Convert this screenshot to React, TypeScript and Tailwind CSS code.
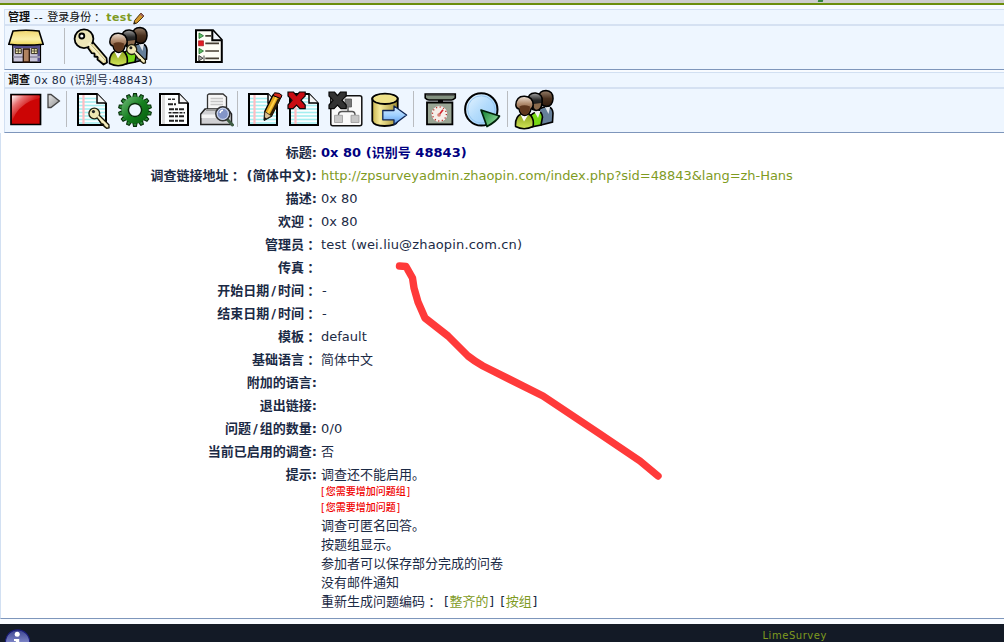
import type { ReactNode } from "react";

const FONT = "font-['DejaVu_Sans','Noto_Sans_CJK_SC',sans-serif]";

type IconProps = { w: number; className?: string; children: ReactNode };

function Icon({ w, className = "", children }: IconProps) {
  return (
    <svg width={w} height={43} viewBox={`0 0 ${w} 43`} className={`block shrink-0 ${className}`}>
      {children}
    </svg>
  );
}

function Sep({ className = "" }: { className?: string }) {
  return <div className={`mt-[2px] h-[36px] w-px shrink-0 bg-[#b9bcc0] ${className}`} />;
}

/* Full-width colon, centred in its cell. */
function Colon() {
  return (
    <span className="inline-block translate-y-px leading-none font-['Noto_Sans_CJK_TC',sans-serif]">：</span>
  );
}

function Slash() {
  return <span className="px-[2px]">/</span>;
}

function Defs() {
  return (
    <svg width="0" height="0" className="absolute">
      <defs>
        <linearGradient id="roof" x1="0" y1="0" x2="0" y2="1">
          <stop offset="0" stopColor="#f0d56e" />
          <stop offset=".6" stopColor="#fbf0a8" />
          <stop offset="1" stopColor="#f0d650" />
        </linearGradient>
        <linearGradient id="stop" x1="0" y1="0" x2=".8" y2=".8">
          <stop offset="0" stopColor="#fff" />
          <stop offset=".3" stopColor="#e87070" />
          <stop offset=".6" stopColor="#d21c1c" />
          <stop offset="1" stopColor="#cc0a0a" />
        </linearGradient>
        <linearGradient id="play" x1="0" y1="0" x2="1" y2="1">
          <stop offset="0" stopColor="#e6e6e6" />
          <stop offset="1" stopColor="#8f8f8f" />
        </linearGradient>
        <linearGradient id="gear" x1="0" y1="0" x2="1" y2="1">
          <stop offset="0" stopColor="#5fae68" />
          <stop offset=".5" stopColor="#15801f" />
          <stop offset="1" stopColor="#08640f" />
        </linearGradient>
        <linearGradient id="brown" x1="0" y1="0" x2="0" y2="1">
          <stop offset="0" stopColor="#f0e4d8" />
          <stop offset=".4" stopColor="#b08a6c" />
          <stop offset="1" stopColor="#5a351c" />
        </linearGradient>
        <linearGradient id="black" x1="0" y1="0" x2="0" y2="1">
          <stop offset="0" stopColor="#a5a5a5" />
          <stop offset=".4" stopColor="#2b2b2b" />
          <stop offset="1" stopColor="#000" />
        </linearGradient>
        <linearGradient id="darkbrown" x1="0" y1="0" x2="0" y2="1">
          <stop offset="0" stopColor="#99816c" />
          <stop offset=".5" stopColor="#4b3220" />
          <stop offset="1" stopColor="#2c180b" />
        </linearGradient>
        <linearGradient id="olive" x1="0" y1="0" x2="0" y2="1">
          <stop offset="0" stopColor="#8ba11a" />
          <stop offset="1" stopColor="#d3e65a" />
        </linearGradient>
        <linearGradient id="pie" x1="0" y1="0" x2="1" y2="1">
          <stop offset="0" stopColor="#eaf6ff" />
          <stop offset=".5" stopColor="#b4dcfc" />
          <stop offset="1" stopColor="#94caf8" />
        </linearGradient>
        <linearGradient id="wedge" x1="0" y1="0" x2="1" y2=".6">
          <stop offset="0" stopColor="#0a7a2a" />
          <stop offset="1" stopColor="#8fdc9c" />
        </linearGradient>
        <linearGradient id="cyl" x1="0" y1="0" x2="1" y2="0">
          <stop offset="0" stopColor="#c9b44e" />
          <stop offset=".3" stopColor="#f6eb9b" />
          <stop offset="1" stopColor="#a08c30" />
        </linearGradient>
        <linearGradient id="arrow" x1="0" y1="0" x2="0" y2="1">
          <stop offset="0" stopColor="#d8ecff" />
          <stop offset=".5" stopColor="#9fd0ff" />
          <stop offset="1" stopColor="#5796e8" />
        </linearGradient>
        <linearGradient id="info" x1="0" y1="0" x2="0" y2="1">
          <stop offset="0" stopColor="#3b438f" />
          <stop offset=".5" stopColor="#7a82c4" />
          <stop offset="1" stopColor="#2b3190" />
        </linearGradient>
      </defs>
    </svg>
  );
}

function SmallKey({ x, y, s = 1 }: { x: number; y: number; s?: number }) {
  return (
    <g transform={`translate(${x} ${y}) scale(${s})`}>
      <path d="M2.5 3.5 L5 2 L13.6 10.6 L13.8 13.4 L11.5 13.8 L9 11.8 L8.6 10 L6.5 9.4 Z" fill="#ecdfa0" stroke="#151306" strokeWidth="1.3" strokeLinejoin="round" />
      <circle r="5" fill="#efe6b2" stroke="#222010" strokeWidth="1.3" />
      <path d="M3.2 2.6 L12.6 12" stroke="#f6efc4" strokeWidth="1.8" />
      <circle cx="-.8" cy="-1.8" r="1.5" fill="#222" />
    </g>
  );
}

function People({ withKey = false }: { withKey?: boolean }) {
  return (
    <>
      <path d="M25 20 Q38 14 39 24 L38.5 33 L27 36 Z" fill="#657f99" stroke="#000" strokeWidth="1.6" />
      <path d="M31 18 L34.5 25 L36 18 Z" fill="#e4e8ee" />
      <path d="M24.5 8.5 Q25 1.4 32 1.4 Q39.4 2 39 10 Q38.5 17 32.5 17.6 Q26 17 24.5 8.5 Z" fill="url(#darkbrown)" stroke="#000" strokeWidth="1.5" />
      <path d="M17 26 Q27 18 28.5 28 L27 36 L17 38 Z" fill="#76d815" stroke="#000" strokeWidth="1.6" />
      <path d="M20 22 L24 29 L26.5 22 Z" fill="#f1f1f1" />
      <path d="M13.5 12 Q14 3.6 21.5 4 Q29 5 28.2 12.5 Q28 21 22 21.6 Q15 21 13.5 12 Z" fill="url(#black)" stroke="#000" strokeWidth="1.5" />
      <path d="M19.2 15 L27.2 14 Q26.5 20.6 22.4 20.8 Q19.5 20 19.2 15 Z" fill="#8a6a4c" />
      <path d="M1.6 37.5 Q.8 28 7 25 L15 25 Q20.6 29 19 37.5 Q10 42 1.6 37.5 Z" fill="url(#olive)" stroke="#000" strokeWidth="1.6" />
      <path d="M6.5 25.5 L10 32.5 L14.5 25.5 Z" fill="#fff" />
      <path d="M1.8 16 Q2.4 6.8 10.6 7.2 Q19 7.6 19.2 16 Q18.5 19.6 17 20 Q16 26.2 10.6 26.5 Q6 26 5 20 Q2 19.4 1.8 16 Z" fill="url(#brown)" stroke="#000" strokeWidth="1.5" />
      <path d="M5.4 17.5 Q10 15 16 17.5 Q16 25.7 10.5 25.7 Q6 25.2 5.4 17.5 Z" fill="#5f371d" />
      {withKey && <SmallKey x={23.7} y={23.5} />}
    </>
  );
}

function Page({ x = 0, right = 30, lined = true }: { x?: number; right?: number; lined?: boolean }) {
  const f = right - 10;
  return (
    <g>
      <path d={`M${x + 1} 5 H${f} L${right - 1} 14.5 V36 H${x + 1} Z`} fill="#fcfefe" stroke="#000" strokeWidth="2" />
      {lined &&
        [9.5, 13, 16.5, 20, 23.5, 27, 30.5, 34].map((y) => (
          <path key={y} d={`M${x + 2} ${y} H${y < 14 ? f - 1 : right - 2}`} stroke="#a4eef0" strokeWidth="1.6" />
        ))}
      {lined && <path d={`M${x + 6.5} 6 V35`} stroke="#ffbcc2" strokeWidth="2.2" />}
      <path d={`M${f} 5 V14 H${right - 1}`} fill="#f4f4f4" stroke="#000" strokeWidth="1.5" />
    </g>
  );
}

function Cross({ fill }: { fill: string }) {
  return (
    <path
      d="M1 3 H6.5 L9.5 6.6 L12.5 3 H18.2 V7 L14 11.2 L18.2 16 V19.7 H13 L9.5 16 L6 19.7 H1 V16 L5 11.2 L1 7 Z"
      fill={fill}
      stroke="#080808"
      strokeWidth="1.2"
    />
  );
}

function Pencil() {
  return (
    <g strokeLinejoin="round">
      <path d="M25 6 L32.5 8.5 L23.5 27 L16.3 31 L16.8 22.5 Z" fill="#e4a61d" stroke="#000" strokeWidth="1.5" />
      <path d="M28.5 7.8 L19.4 25" stroke="#ffd24a" strokeWidth="1.8" />
      <path d="M31.2 9.8 L22.6 26.5" stroke="#302008" strokeWidth="2.6" />
      <path d="M16.8 22.5 L23.5 27 L16.3 31 Z" fill="#dcc49a" stroke="#302515" strokeWidth=".9" />
      <path d="M16.4 28 L18.8 29.5 L16.2 31.2 Z" fill="#111" />
      <path d="M26.5 3.8 Q32 3.5 34 6.5 L32.5 9.5 L25 6.5 Z" fill="#d22a1c" stroke="#000" strokeWidth="1" />
    </g>
  );
}

const TEETH = Array.from({ length: 14 }, (_, i) => (i * 360) / 14);

function TitleStrip({ children }: { children: ReactNode }) {
  return (
    <div className="flex h-[17px] items-center border-t border-[#d2e0f2] pl-[3px] text-[11px] whitespace-nowrap text-[#1b2a45]">
      {children}
    </div>
  );
}

function AdminBar() {
  return (
    <section className="ml-1 h-[61px] border-b border-l border-b-[#7e96bb] border-l-[#d2e0f2] bg-[#eef6ff]">
      <div className="h-[15px]">
        <TitleStrip>
          <b className="text-[#111]">管理</b>
          <span className="ml-[4px] tracking-[0.7px] text-[#111]">--</span>
          <span className="ml-[4px] text-[#111]">
            登录身份
            <Colon />
          </span>
          <b className="ml-[4px] tracking-[0.35px] text-[#7f9b1f]">test</b>
          <svg width="12" height="13" viewBox="0 0 12 13" className="ml-[1px] block">
            <path d="M8 1 L11 4 L4 11 L.8 12 L1.6 8.5 Z" fill="#d29a2c" stroke="#4c320c" />
            <path d="M8 1 L11 4 L9.8 5.2 L6.8 2.2 Z" fill="#9b6262" />
            <path d="M.6 12.2 L1.4 9.6 L3 11.4 Z" fill="#222" />
          </svg>
        </TitleStrip>
      </div>
      <div className="h-[2px] bg-[#d5e1f2]" />
      <div className="flex h-[43px]">
        <Icon w={36} className="ml-[3px]">
          <path d="M4.8 19 H32.4 V36.3 H4.8 Z" fill="#c9c5da" stroke="#000" strokeWidth="1.4" />
          <path d="M5.5 19 H32 V22 H5.5 Z M29.5 20 H32 V35.6 H29.5 Z" fill="#57508c" />
          <path d="M5.5 31 H15 M22 31 H32" stroke="#9995ad" strokeWidth="2" />
          <path d="M7.3 22.6 h6 v5 h-6 z M23.3 22.6 h6 v5 h-6 z" fill="#f4eeb4" stroke="#332b20" />
          <path d="M10.3 22.6 v5 M26.3 22.6 v5 M7.3 25 h6 M23.3 25 h6" stroke="#332b20" strokeWidth=".8" />
          <path d="M15.3 23 h6 v13 h-6 z" fill="#b08260" stroke="#2b150a" strokeWidth="1.3" />
          <path d="M5 5 Q18 3.6 31 5 L35.2 18.3 Q18 20 .8 18.3 Z" fill="url(#roof)" stroke="#000" strokeWidth="1.6" />
        </Icon>
        <Sep className="ml-[20px]" />
        <Icon w={35} className="ml-[8px]">
          <path d="M13 19 L18.5 14.5 L33.5 32 L34 36.5 L30.5 38.5 L24.5 33.5 L24.7 31 L21.5 30.5 L21.6 27.5 L18.8 27.2 Z" fill="#e8dc9e" stroke="#000" strokeWidth="1.8" strokeLinejoin="round" />
          <circle cx="11" cy="12.8" r="9.4" fill="#eee6b8" stroke="#000" strokeWidth="1.8" />
          <path d="M15.5 17 L31.5 34.5" stroke="#f6f0c9" strokeWidth="3.4" />
          <path d="M17.5 18 L32 34" stroke="#b8aa65" strokeWidth=".9" />
          <circle cx="8.8" cy="10" r="2.5" fill="#fff" stroke="#000" strokeWidth="1.8" />
        </Icon>
        <Icon w={40}>
          <People withKey />
        </Icon>
        <Icon w={30} className="ml-[47px]">
          <path d="M1 4.2 H18 L26.8 14 V36 H1 Z" fill="#fdfdf6" stroke="#000" strokeWidth="2" />
          <path d="M17.3 4.5 V14.3 H26.5" fill="#eef3fa" stroke="#000" strokeWidth="2" />
          <path d="M10.3 9.8 H16 M10.3 17.3 H24 M10.3 25 H24 M10.3 32.3 H24" stroke="#453e32" strokeWidth="1.7" />
          <path d="M4 7 L8.5 9.8 L4 12.5 Z M4 22.3 L8.5 25 L4 27.8 Z" fill="#61bd66" stroke="#1b6b2a" strokeWidth=".8" />
          <path d="M3.5 14.8 h5 v5 h-5 z" fill="#df1d25" stroke="#9d0b12" strokeWidth=".6" />
          <path d="M3.8 29.5 L8 32.2 L3.8 35 Z M9 29.5 V35" fill="#aaa" stroke="#333" strokeWidth=".9" />
        </Icon>
      </div>
    </section>
  );
}

function SurveyBar() {
  return (
    <section className="mt-[2px] ml-1 h-[61px] border-b border-l border-b-[#7e96bb] border-l-[#d2e0f2] bg-[#eef6ff]">
      <div className="h-[15px]">
        <TitleStrip>
          <b className="text-[#111]">调查</b>
          <span className="ml-[4px] tracking-[0.24px]">0x 80 (识别号:48843)</span>
        </TitleStrip>
      </div>
      <div className="h-[2px] bg-[#d5e1f2]" />
      <div className="flex h-[43px]">
        <Icon w={32} className="ml-[5px]">
          <path d="M1 5.7 H30.5 V35.5 H1 Z" fill="#cc0505" stroke="#000" strokeWidth="1.7" />
          <path d="M2 6.5 H29.5 V9 Q13 13 5.5 25 L2 32 Z" fill="url(#stop)" />
        </Icon>
        <Icon w={14} className="ml-[5px]">
          <path d="M1 5.5 L4 5.5 L12.4 12 L4 18.5 H1 Z" fill="url(#play)" stroke="#444" strokeWidth="1.3" />
        </Icon>
        <Sep className="ml-[5px]" />
        <Icon w={34} className="ml-[10px]">
          <Page />
          <SmallKey x={17.3} y={24.5} s={1.07} />
        </Icon>
        <Icon w={35} className="ml-[7px]">
          {TEETH.map((a) => (
            <path key={a} d="M14.9 8 L15.6 4.6 H18.4 L19.1 8 Z" transform={`rotate(${a} 17 21)`} fill="#2a8a34" stroke="#052c08" strokeWidth="1.1" />
          ))}
          <circle cx="17" cy="21" r="10.3" fill="none" stroke="url(#gear)" strokeWidth="6.6" />
          <circle cx="17" cy="21" r="6.6" fill="#eef6ff" stroke="#052c08" strokeWidth="1.5" />
        </Icon>
        <Icon w={31} className="ml-[6px]">
          <Page lined={false} />
          <path d="M4.5 6 V35" stroke="#ddd" strokeWidth="3" />
          <path d="M9 10.3 H16" stroke="#333" strokeWidth="1.5" strokeDasharray="3 1" />
          <path d="M9 15.3 H17 M10 20.3 H26 M10 27.3 H26 M10 31.8 H26" stroke="#222" strokeWidth="2" strokeDasharray="5 1 3 1" />
          <path d="M9.5 23.8 H26" stroke="#222" strokeWidth="1.6" strokeDasharray="3 1 6 1" />
        </Icon>
        <Icon w={34} className="ml-[10px]">
          <path d="M9 5 H23 L26.5 8 V22 H7.5 V6 Z" fill="#f6f6f6" stroke="#333" strokeWidth="1.3" />
          <path d="M10.5 9.5 H23 M10.5 12.5 H23 M10.5 15.5 H23" stroke="#c6c6c6" strokeWidth="1.3" />
          <path d="M5 20 H28 L31.5 25 V35.5 H.8 V25 Z" fill="#d0d0d3" stroke="#222" strokeWidth="1.5" />
          <path d="M1.6 25.5 H30 V29 H1.6 Z" fill="#f4f4f4" />
          <path d="M6 21 H27" stroke="#999" strokeWidth="2" />
          <path d="M27 30 L32.5 36" stroke="#3f5c43" strokeWidth="3" strokeLinecap="round" />
          <circle cx="22.8" cy="24.8" r="7" fill="#a8b8de" stroke="#333" strokeWidth="1.5" />
          <circle cx="22.8" cy="24.8" r="5.5" fill="#8395c7" stroke="#d0d8ec" strokeWidth="1" />
          <path d="M20 24 Q20.5 21.5 23 21.3" fill="none" stroke="#fff" strokeWidth="1.4" />
        </Icon>
        <Sep className="ml-[3px]" />
        <Icon w={35} className="ml-[10px]">
          <Page />
          <Pencil />
        </Icon>
        <Icon w={33} className="ml-[4px]">
          <Page x={2} right={32} />
          <Cross fill="#c90c12" />
        </Icon>
        <Icon w={35} className="ml-[8px]">
          <rect x="2.8" y="6.8" width="31" height="30" rx="2" fill="#fafafa" stroke="#111" strokeWidth="1.5" />
          <path d="M17 10 h6.5 v8 h-6.5 z" fill="#777" stroke="#555" strokeWidth=".8" />
          <path d="M10.5 26 Q10.5 22.5 14 22.5 H24 Q27 22.5 27 26 M20 18 V22.5" fill="none" stroke="#555" strokeWidth="1.4" />
          <path d="M6.5 26.3 h8 v7.2 h-8 z M23 26.3 h8 v7.2 h-8 z" fill="#c7c7c7" stroke="#999" strokeWidth=".8" />
          <Cross fill="#333" />
        </Icon>
        <Icon w={37} className="ml-[8px]">
          <path d="M1.3 9.5 V32 Q3 37 13.5 37 Q25 37 26.7 32 V9.5 Z" fill="url(#cyl)" stroke="#000" strokeWidth="1.8" />
          <ellipse cx="14" cy="9.8" rx="12.7" ry="5.2" fill="#f2e692" stroke="#000" strokeWidth="1.8" />
          <ellipse cx="14" cy="9.8" rx="11" ry="3.8" fill="#eee188" />
          <path d="M11.8 21.5 H23 V17 L35.6 26 L23 35.6 V30.8 H11.8 Z" fill="url(#arrow)" stroke="#0e2555" strokeWidth="1.3" strokeLinejoin="round" />
        </Icon>
        <Sep className="ml-[5px]" />
        <Icon w={33} className="ml-[10px]">
          <path d="M14 11 h5 v4 h-5 z" fill="#111" />
          <path d="M1.2 5 H31.3 V9 Q29 11 27.5 11 H5 Q3 11 1.2 9 Z" fill="#81907f" stroke="#000" strokeWidth="1.6" />
          <path d="M2.5 5.8 H30" stroke="#333" strokeWidth="1.6" />
          <path d="M3 13.5 H28.4 V35.3 H3 Z" fill="#99a594" stroke="#000" strokeWidth="1.8" />
          <circle cx="15.4" cy="25" r="8.4" fill="#f5eee9" stroke="#8c9287" strokeWidth=".8" />
          <circle cx="15.4" cy="25" r="7" fill="none" stroke="#b9362f" strokeWidth="1.4" strokeDasharray="1.2 2.465" />
          <path d="M14.5 26.5 L19 20.8" stroke="#d3202a" strokeWidth="1.6" />
          <circle cx="15" cy="26" r="1.8" fill="#d78276" />
        </Icon>
        <Icon w={37} className="ml-[7px]">
          <circle cx="17.3" cy="20.4" r="16.2" fill="url(#pie)" stroke="#000" strokeWidth="2" />
          <circle cx="17.3" cy="20.4" r="13.6" fill="none" stroke="#8fc2ee" strokeWidth=".8" />
          <path d="M17 21 L35.5 27 Q33 32 23 37.5 Z" fill="url(#wedge)" stroke="#00210a" strokeWidth="1.7" strokeLinejoin="round" />
        </Icon>
        <Sep className="ml-[6px]" />
        <Icon w={40} className="ml-[6px]">
          <People />
        </Icon>
      </div>
    </section>
  );
}

type Row = { label: ReactNode; value?: ReactNode };

const ROWS: Row[] = [
  { label: "标题:", value: <b className="tracking-[0.03px] text-[#000080]">0x 80 (识别号 48843)</b> },
  {
    label: (
      <>
        调查链接地址
        <Colon />
        <span className="ml-[5px] tracking-[0.2px]">(简体中文):</span>
      </>
    ),
    value: (
      <a className="tracking-[-0.045px] text-[#7f9b1f]">
        http://zpsurveyadmin.zhaopin.com/index.php?sid=48843&amp;lang=zh-Hans
      </a>
    ),
  },
  { label: "描述:", value: "0x 80" },
  { label: <>欢迎<Colon /></>, value: "0x 80" },
  { label: <>管理员<Colon /></>, value: <span className="tracking-[0.16px]">test (wei.liu@zhaopin.com.cn)</span> },
  { label: <>传真<Colon /></> },
  { label: <>开始日期<Slash />时间<Colon /></>, value: <span className="ml-[1px]">-</span> },
  { label: <>结束日期<Slash />时间<Colon /></>, value: <span className="ml-[1px]">-</span> },
  { label: <>模板<Colon /></>, value: "default" },
  { label: <>基础语言<Colon /></>, value: "简体中文" },
  { label: "附加的语言:" },
  { label: "退出链接:" },
  { label: <>问题<Slash />组的数量:</>, value: <span className="tracking-[0.2px]">0/0</span> },
  { label: "当前已启用的调查:", value: "否" },
  { label: "提示:", value: "调查还不能启用。" },
];

const NOTES = ["调查可匿名回答。", "按题组显示。", "参加者可以保存部分完成的问卷", "没有邮件通知"];

function Bracketed({ children, className = "" }: { children: ReactNode; className?: string }) {
  return (
    <span className={className}>
      <span className="tracking-[0.3px]">[</span>
      <a className="text-[#7f9b1f]">{children}</a>
      <span className="ml-[0.5px] tracking-[0.3px]">]</span>
    </span>
  );
}

function Details() {
  return (
    <main className="h-[486px] border-b border-l border-b-[#7e96bb] border-l-[#d2e0f2] bg-white pt-[8px] text-[13px] whitespace-nowrap text-[#1b2a45]">
      {ROWS.map((r, i) => (
        <div key={i} className="flex h-[23px] items-center leading-[23px]">
          <div className="w-[316px] shrink-0 text-right font-bold">{r.label}</div>
          <div className="ml-[4px]">{r.value}</div>
        </div>
      ))}
      <div className="-mt-[2px] ml-[320px]">
        <div className="text-[10px] leading-[16px] font-medium text-[#f00000]">
          <span className="tracking-[0.8px]">[</span>您需要增加问题组<span className="ml-[0.5px]">]</span>
        </div>
        <div className="text-[10px] leading-[16px] font-medium text-[#f00000]">
          <span className="tracking-[0.8px]">[</span>您需要增加问题<span className="ml-[0.5px]">]</span>
        </div>
        {NOTES.map((n) => (
          <div key={n} className="leading-[19px]">{n}</div>
        ))}
        <div className="leading-[19px]">
          重新生成问题编码
          <Colon />
          <Bracketed className="ml-[6px]">整齐的</Bracketed>
          <Bracketed className="ml-[6px]">按组</Bracketed>
        </div>
      </div>
    </main>
  );
}

export default function App() {
  return (
    <div className={`relative flex h-[642px] w-[1004px] flex-col overflow-hidden bg-[#f8fbff] ${FONT}`}>
      <Defs />
      <div className="relative h-[5px] shrink-0 border-b-2 border-[#6b8e0b] bg-[#cdcdcd]">
        <div className="absolute top-0 left-[818px] h-[2px] w-[5px] -skew-x-12 bg-[#33853b]" />
      </div>
      <div className="h-[4px] shrink-0" />
      <AdminBar />
      <SurveyBar />
      <Details />
      <footer className="mt-[5px] flex h-[18px] shrink-0 justify-between overflow-hidden bg-[#131a26]">
        <svg width="26" height="26" viewBox="0 0 26 26" className="mt-[5px] ml-[5px] block shrink-0">
          <circle cx="12.6" cy="13" r="12.1" fill="url(#info)" stroke="#1a1c78" strokeWidth="1.2" />
          <circle cx="12.2" cy="5.2" r="2.5" fill="#fff" />
          <path d="M9 10 H14.2 V20 H10.8 V12 H9 Z" fill="#fff" />
        </svg>
        <a className="mr-[177px] pt-[4px] text-[10px] leading-[16px] tracking-[0.55px] text-[#7f9b1f]">LimeSurvey</a>
      </footer>
      <svg width="1004" height="642" viewBox="0 0 1004 642" className="pointer-events-none absolute inset-0">
        <path
          d="M399.5 266 L406 266.5 L412.5 278 L414 288 L418 302 L425 318 L448 336 L468 356 Q475 361.5 483 366 L543 396 L600 434 L640 461 L658 476"
          fill="none"
          stroke="#ff3a3a"
          strokeWidth="7.4"
          strokeLinecap="round"
          strokeLinejoin="round"
        />
      </svg>
    </div>
  );
}
